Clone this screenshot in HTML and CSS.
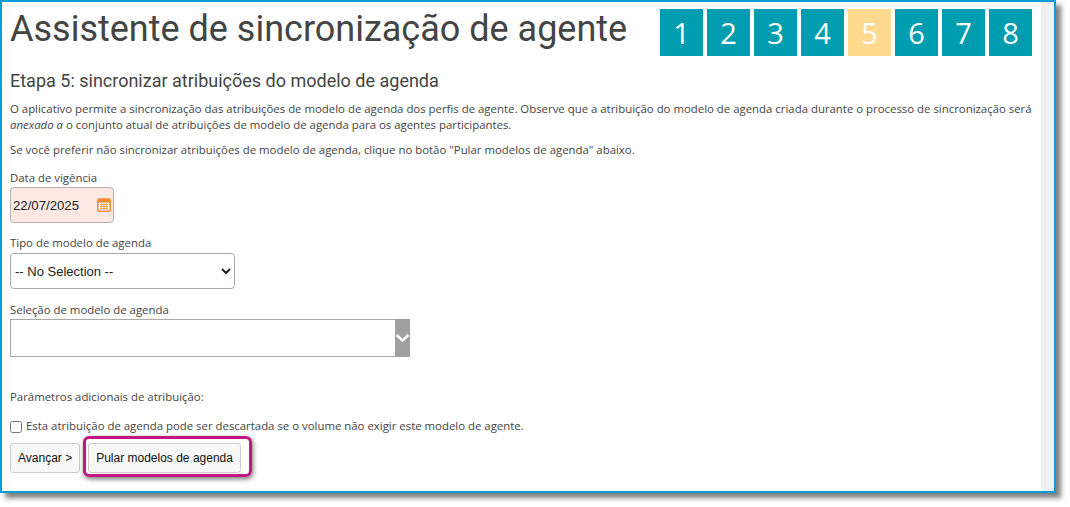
FILE: index.html
```html
<!DOCTYPE html>
<html lang="pt-BR">

<head>
	<meta charset="UTF-8">
	<title>Assistente de sincronização de agente</title>
	<link rel="stylesheet" href="styles.css">
</head>

<body>
	<div class="frame">
		<div class="content">
			<div class="header">
				<h1>Assistente de sincronização de agente</h1>
				<div class="steps">
					<div class="step">1</div>
					<div class="step">2</div>
					<div class="step">3</div>
					<div class="step">4</div>
					<div class="step current">5</div>
					<div class="step">6</div>
					<div class="step">7</div>
					<div class="step">8</div>
				</div>
			</div>
			<h2>Etapa 5: sincronizar atribuições do modelo de agenda</h2>
			<p class="intro">O aplicativo permite a sincronização das atribuições de modelo de agenda dos perfis de agente. Observe que a atribuição do modelo de agenda criada durante o processo de sincronização será <em>anexado a</em> o conjunto atual de atribuições de modelo de agenda para os agentes participantes.</p>
			<p class="hint">Se você preferir não sincronizar atribuições de modelo de agenda, clique no botão "Pular modelos de agenda" abaixo.</p>

			<label class="fieldLabel dateLabel" for="startDate">Data de vigência</label>
			<div class="dateInput">
				<input type="text" id="startDate" value="22/07/2025">
				<svg class="calIcon" width="14" height="14" viewBox="0 0 14 14">
					<rect x="0.75" y="1" width="12.5" height="12.25" rx="2" fill="#fff3e6" stroke="#f58a2e" stroke-width="1.5"/>
					<rect x="0.75" y="1" width="12.5" height="3.5" fill="#f58a2e"/>
					<path d="M3 6.5h8M3 8.5h8M3 10.5h8M4.5 5.5v6.5M7 5.5v6.5M9.5 5.5v6.5" stroke="#f7a863" stroke-width="1" fill="none"/>
				</svg>
			</div>

			<label class="fieldLabel typeLabel" for="templateType">Tipo de modelo de agenda</label>
			<select id="templateType" class="select">
				<option>-- No Selection --</option>
			</select>

			<label class="fieldLabel pickLabel">Seleção de modelo de agenda</label>
			<div class="picker">
				<div class="pickerValue"></div>
				<div class="pickerArrow">
					<svg width="15" height="10" viewBox="0 0 15 10">
						<path d="M1.5 2l6 5.5 6-5.5" fill="none" stroke="#fff" stroke-width="2.4"/>
					</svg>
				</div>
			</div>

			<div class="params">Parâmetros adicionais de atribuição:</div>
			<div class="checkRow">
				<input type="checkbox" id="discard">
				<label for="discard">Esta atribuição de agenda pode ser descartada se o volume não exigir este modelo de agente.</label>
			</div>
			<div class="buttons">
				<button class="btn">Avançar &gt;</button>
				<div class="marked">
					<button class="btn">Pular modelos de agenda</button>
				</div>
			</div>
		</div>
		<div class="scrollbar"></div>
	</div>
</body>

</html>
```

FILE: styles.css
```css
body,
html {
	margin: 0;
	padding: 0;
	height: 100%;
	background-color: #fff;
	overflow: hidden;
}

.frame {
	width: 1056px;
	height: 493px;
	box-sizing: border-box;
	border: 2px solid #0b9bd8;
	display: flex;
	background-color: #fff;
	box-shadow: 5px 5px 5px #808080;
}

.content {
	flex: 1;
	min-width: 0;
	padding: 0 8px;
	color: #444;
	font-family: "Open Sans", sans-serif;
	font-size: 11.4px;
}

.scrollbar {
	flex: 0 0 13px;
	background-color: #f1f1f1;
}

.header {
	display: flex;
	justify-content: space-between;
	padding-top: 7px;
	padding-right: 1px;
}

h1 {
	margin: 0;
	font-family: Roboto, sans-serif;
	font-weight: 400;
	font-size: 36px;
	line-height: 40px;
	color: #444;
}

.steps {
	display: flex;
	gap: 4px;
}

.step {
	width: 43px;
	height: 47px;
	background-color: #009db0;
	color: #fff;
	font-size: 29px;
	line-height: 47px;
	text-align: center;
}

.step.current {
	background-color: #ffd98e;
}

h2 {
	margin: 13px 0 0;
	font-family: Roboto, sans-serif;
	font-weight: 400;
	font-size: 18px;
	line-height: 24px;
	color: #444;
}

p {
	margin: 0;
	line-height: 16px;
}

.intro {
	margin-top: 8px;
}

.hint {
	margin-top: 9px;
}

.fieldLabel {
	display: block;
	line-height: 16px;
}

.dateLabel {
	margin-top: 12px;
	margin-bottom: 1px;
}

.dateInput {
	width: 104px;
	height: 36px;
	box-sizing: border-box;
	border: 1px solid #b9b0ac;
	border-radius: 4px;
	background-color: #fde8e3;
	display: flex;
	align-items: center;
	padding: 0 2px;
}

.dateInput input {
	flex: 1;
	min-width: 0;
	border: none;
	padding: 0;
	background: none;
	font-family: "Liberation Sans", sans-serif;
	font-size: 13.2px;
	color: #222;
}

.calIcon {
	flex: 0 0 auto;
}

.typeLabel {
	margin-top: 12px;
}

.select {
	display: block;
	margin-top: 2px;
	width: 225px;
	height: 36px;
	box-sizing: border-box;
	border: 1px solid #aaa;
	border-radius: 4px;
	background-color: #fff;
	padding: 0;
	font-family: "Liberation Sans", sans-serif;
	font-size: 13px;
	color: #222;
}

.pickLabel {
	margin-top: 13px;
}

.picker {
	display: flex;
	margin-top: 1px;
	width: 400px;
	height: 38px;
}

.pickerValue {
	flex: 1;
	box-sizing: border-box;
	border: 1px solid #a9a9a9;
	border-right: none;
}

.pickerArrow {
	flex: 0 0 15px;
	background-color: #a0a0a0;
	display: flex;
	align-items: center;
	justify-content: center;
}

.params {
	margin-top: 32px;
	line-height: 16px;
}

.checkRow {
	display: flex;
	align-items: center;
	margin-top: 13px;
	line-height: 16px;
}

.checkRow input {
	margin: 1px 0 0;
	width: 12px;
	height: 12px;
}

.checkRow label {
	margin-left: 4px;
}

.buttons {
	display: flex;
	gap: 8px;
	margin-top: 9px;
}

.btn {
	height: 30px;
	padding: 0 7px;
	box-sizing: border-box;
	border: 1px solid #ccc;
	border-radius: 3px;
	background-color: #f8f8f8;
	color: #111;
	font-family: "Liberation Sans", sans-serif;
	font-size: 12px;
}

/* callout drawn around the button */
.marked {
	position: relative;
}

.marked::after {
	content: "";
	position: absolute;
	left: -5px;
	right: -11px;
	top: -7px;
	bottom: -4px;
	border: 3px solid #c2177f;
	border-radius: 6px;
	box-shadow: 1px 2px 5px #777;
	pointer-events: none;
}
```
